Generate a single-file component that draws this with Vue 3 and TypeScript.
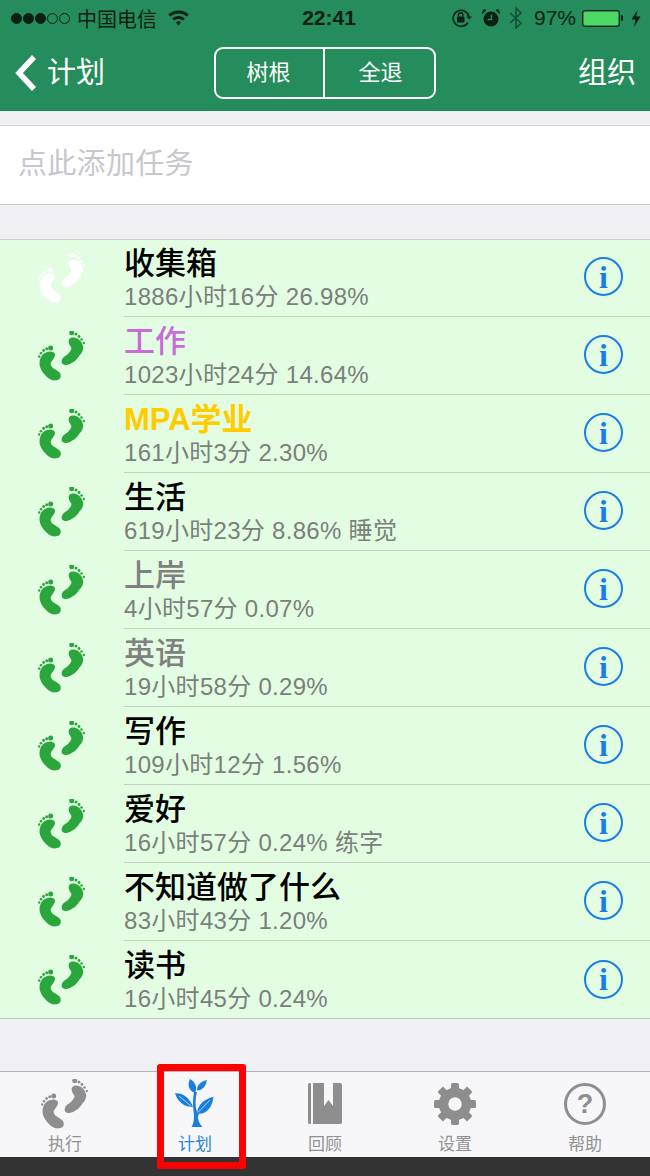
<script setup lang="ts">
interface Plan {
  title: string
  detail: string
  tone?: string
  idle?: boolean
}

const plans: Plan[] = [
  { title: '收集箱', detail: '1886小时16分 26.98%', idle: true },
  { title: '工作', detail: '1023小时24分 14.64%', tone: 'purple' },
  { title: 'MPA学业', detail: '161小时3分 2.30%', tone: 'yellow' },
  { title: '生活', detail: '619小时23分 8.86% 睡觉' },
  { title: '上岸', detail: '4小时57分 0.07%', tone: 'gray' },
  { title: '英语', detail: '19小时58分 0.29%', tone: 'gray' },
  { title: '写作', detail: '109小时12分 1.56%' },
  { title: '爱好', detail: '16小时57分 0.24% 练字' },
  { title: '不知道做了什么', detail: '83小时43分 1.20%' },
  { title: '读书', detail: '16小时45分 0.24%' },
]

const signal = [true, true, true, false, false]
const gearTeeth = [0, 45, 90, 135, 180, 225, 270, 315]
</script>

<template>
  <div class="app">
    <svg class="defs" width="0" height="0">
      <symbol id="feet" viewBox="0 -1 48 50">
        <path d="M31.300 7C33 5.500 35 5.200 37 5.700C41 6.500 44.500 10 45.300 15.700C45 19 43.500 21.500 41.300 23.700C39.500 26.500 37.500 29 34.700 30.300C32 32.300 29.500 33.500 27 33C24.500 32.500 23.300 31 23.700 29C24 27 25 25.500 26.500 24.500C28.500 23.300 30.500 22 31.300 20.300C33 18.500 33.800 17 33.300 15.700C32.500 14 31 12.500 30.700 10.300C30.500 9 30.700 8 31.300 7Z" />
        <circle cx="33.700" cy="0.800" r="2.500" />
        <circle cx="38" cy="2" r="1.500" />
        <circle cx="41" cy="4.500" r="1.400" />
        <circle cx="43.500" cy="7.500" r="1.300" />
        <circle cx="45.800" cy="11" r="1.200" />
        <path d="M3.700 23.700C5 22 7 20.800 8.700 20.300C10.500 19.500 12.500 19.300 13.700 19.700C16 20.300 17.300 21.500 17 23C16.800 25 15.700 26.500 14.700 28C13.300 29.700 12.500 31 12.700 32.300C13 34 14 35.300 15.300 36.300C17.500 37.800 19.700 38.800 21.300 40.300C22.500 41.500 23 43 22.700 44.700C22.300 46.500 21 47.700 19.300 48C17.300 48.500 15.500 48.500 13.700 48C11 47 9 45 7 43C4.500 40.500 3 37.500 2 34.700C1 31.500 1.500 27 3.700 23.700Z" />
        <circle cx="12.700" cy="16" r="2.500" />
        <circle cx="8.700" cy="16.700" r="1.500" />
        <circle cx="5.600" cy="18.500" r="1.400" />
        <circle cx="3" cy="21.200" r="1.300" />
        <circle cx="1.200" cy="24.500" r="1.200" />
      </symbol>
    </svg>

    <header class="top">
      <div class="status">
        <div class="status-left">
          <span class="dots">
            <i v-for="(on, idx) in signal" :key="idx" class="dot" :class="{ on }"></i>
          </span>
          <span class="carrier">中国电信</span>
          <svg class="wifi" width="21" height="16" viewBox="0 0 21 16">
            <path d="M10.500 0.500C6.500 0.500 3 2 0.300 4.500L2.300 6.600C4.500 4.500 7.300 3.400 10.500 3.400C13.700 3.400 16.500 4.500 18.700 6.600L20.700 4.500C18 2 14.500 0.500 10.500 0.500Z" />
            <path d="M10.500 6C8 6 5.800 6.900 4.200 8.500L6.200 10.600C7.300 9.500 8.800 8.900 10.500 8.900C12.200 8.900 13.700 9.500 14.800 10.600L16.800 8.500C15.200 6.900 13 6 10.500 6Z" />
            <path d="M10.500 11.300C9.500 11.300 8.700 11.700 8.100 12.300L10.500 15.500L12.900 12.300C12.300 11.700 11.500 11.300 10.500 11.300Z" />
          </svg>
        </div>
        <span class="time">22:41</span>
        <div class="status-right">
          <svg class="rot" width="21" height="20" viewBox="0 0 21 20">
            <path d="M17 14.500A8 8 0 1 1 18 9" fill="none" stroke="#0b1f14" stroke-width="1.500" />
            <path d="M15.500 8.500H21L18.200 11.500Z" fill="#0b1f14" />
            <rect x="6" y="8.500" width="7.500" height="6" rx="1" fill="#0b1f14" />
            <path d="M7.500 8.500V7A2.200 2.200 0 0 1 12 7V8.500" fill="none" stroke="#0b1f14" stroke-width="1.300" />
          </svg>
          <svg class="alarm" width="18" height="18" viewBox="0 0 18 18">
            <circle cx="9" cy="10" r="7.500" fill="#0b1f14" />
            <path d="M0.500 4.500L4 1.200L1.500 0.800ZM17.500 4.500L14 1.200L16.500 0.800Z" fill="#0b1f14" stroke="#0b1f14" />
            <path d="M9.500 5.500V10.500H5.500" fill="none" stroke="#258c5b" stroke-width="1.500" />
          </svg>
          <svg class="bt" width="14" height="22" viewBox="0 0 14 22">
            <path d="M1 6L12 16L7 21V1L12 6L1 16" fill="none" stroke="#14513a" stroke-width="1.600" />
          </svg>
          <span class="percent">97%</span>
          <span class="battery"><span class="battery-fill"></span></span>
          <span class="nub"></span>
          <svg class="bolt" width="10" height="17" viewBox="0 0 10 17">
            <path d="M6.500 0L0.500 9.500H4.500L3 17L9.500 6.500H5.300Z" fill="#0b1f14" />
          </svg>
        </div>
      </div>
      <nav class="nav">
        <div class="back">
          <svg width="24" height="38" viewBox="0 0 24 38">
            <path d="M20 3L5 19L20 35" fill="none" stroke="#fff" stroke-width="5.500" />
          </svg>
          <span>计划</span>
        </div>
        <div class="segment">
          <span class="seg-item">树根</span>
          <span class="seg-item">全退</span>
        </div>
        <span class="organize">组织</span>
      </nav>
    </header>

    <main class="main">
      <div class="add-task">点此添加任务</div>
      <section class="list">
        <div v-for="plan in plans" :key="plan.title" class="row">
          <div class="row-icon" :class="{ idle: plan.idle }">
            <svg width="48" height="50"><use href="#feet" /></svg>
          </div>
          <div class="row-body">
            <div class="row-text">
              <div class="row-title" :class="plan.tone">{{ plan.title }}</div>
              <div class="row-detail">{{ plan.detail }}</div>
            </div>
            <span class="info">i</span>
          </div>
        </div>
      </section>
    </main>

    <footer class="tabs">
      <div class="tab">
        <svg class="tab-icon" width="48" height="50"><use href="#feet" /></svg>
        <span>执行</span>
      </div>
      <div class="tab active">
        <svg class="tab-icon" width="40" height="50" viewBox="0 0 40 50">
          <path d="M19 13H22C20 20 20 27 22 33L24 35C22 38 23 43 27.500 48H16.500C19 44 19.500 38 18.500 32C17.500 26 18 19 19 13Z" />
          <path d="M0 14.300C6 13.500 14 17 18 28C10 28 3 24 0 14.300Z" />
          <path d="M4 17L16 27" stroke="#f7f7fa" stroke-width="0.700" />
          <path d="M38.500 17.700C37 29 31 36 22 34.500C22.500 26 29 20 38.500 17.700Z" />
          <path d="M35 21L23 33.500" stroke="#f7f7fa" stroke-width="0.700" />
          <path d="M15 0C20 3 23 8 20 14C14 12 12 6 15 0Z" />
          <path d="M31.700 1C31.500 7 27 11.500 22 11.500C22 6 25 3 31.700 1Z" />
        </svg>
        <span>计划</span>
      </div>
      <div class="tab">
        <svg class="tab-icon" width="36" height="50" viewBox="0 0 36 50">
          <path d="M4 4H2.500C1.500 4 1 5 1 6V43C1 44 1.500 45 2.500 45H4Z" />
          <path d="M6 4H17V27L21.500 21L26 27V4H33C34.500 4 35 5 35 6V43C35 44.500 34.500 45 33 45H6Z" />
        </svg>
        <span>回顾</span>
      </div>
      <div class="tab">
        <svg class="tab-icon" width="44" height="50" viewBox="-22 -25 44 50">
          <circle r="11.500" fill="none" stroke="#8e8e8e" stroke-width="9.500" />
          <rect
            v-for="deg in gearTeeth"
            :key="deg"
            x="-4"
            y="-21"
            width="8"
            height="8"
            rx="1.500"
            :transform="`rotate(${deg})`"
          />
        </svg>
        <span>设置</span>
      </div>
      <div class="tab">
        <div class="tab-icon help"><span>?</span></div>
        <span>帮助</span>
      </div>
    </footer>
    <div class="home-strip"></div>
    <div class="highlight"></div>
  </div>
</template>

<style scoped>
.app {
  position: relative;
  width: 650px;
  height: 1176px;
  display: flex;
  flex-direction: column;
  overflow: hidden;
  background: #efeff4;
  font-family: "Liberation Sans", "Noto Sans CJK SC", sans-serif;
}

.defs {
  position: absolute;
}

.top {
  height: 111px;
  background: #258c5b;
}

.status {
  height: 36px;
  display: grid;
  grid-template-columns: 1fr auto 1fr;
  align-items: center;
  color: #0b1f14;
  padding: 0 9px 0 11px;
}

.status-left,
.status-right {
  display: flex;
  align-items: center;
}

.status-right {
  justify-content: flex-end;
}

.dots {
  display: flex;
  gap: 1px;
}

.dot {
  width: 11px;
  height: 11px;
  box-sizing: border-box;
  border: 1px solid #0b1f14;
  border-radius: 50%;
}

.dot.on {
  background: #0b1f14;
}

.carrier {
  font-size: 20px;
  margin-left: 7px;
}

.wifi {
  margin-left: 11px;
  fill: #0b1f14;
}

.time {
  font-size: 21px;
  font-weight: 700;
  margin-left: 6px;
}

.rot {
  margin-right: 10px;
}

.alarm {
  margin-right: 9px;
}

.bt {
  margin-right: 11px;
}

.percent {
  font-size: 21px;
  margin-right: 6px;
}

.battery {
  width: 38px;
  height: 17px;
  box-sizing: border-box;
  border: 1px solid #0b1f14;
  border-radius: 3px;
  padding: 1px;
  display: flex;
}

.battery-fill {
  flex: 1;
  background: #4cd964;
  border-radius: 1px;
}

.nub {
  width: 2px;
  height: 6px;
  background: #0b1f14;
  margin: 0 8px 0 1px;
  border-radius: 0 2px 2px 0;
}

.nav {
  height: 73px;
  display: grid;
  grid-template-columns: 1fr 222px 1fr;
  align-items: center;
  color: #fff;
  padding: 0 14px;
}

.back {
  display: flex;
  align-items: center;
  gap: 9px;
  font-size: 29px;
}

.back span,
.organize {
  padding-bottom: 6px;
}

.segment {
  height: 52px;
  box-sizing: border-box;
  border: 2px solid #fff;
  border-radius: 9px;
  display: grid;
  grid-template-columns: 107px 1fr;
}

.seg-item {
  display: flex;
  align-items: center;
  justify-content: center;
  font-size: 22px;
  padding: 0 2px 5px 0;
}

.seg-item + .seg-item {
  border-left: 2px solid #fff;
  padding: 0 0 5px 2px;
}

.organize {
  justify-self: end;
  font-size: 29px;
}

.main {
  flex: 1;
  padding-top: 14px;
}

.add-task {
  height: 80px;
  box-sizing: border-box;
  display: flex;
  align-items: center;
  padding: 0 0 8px 18px;
  background: #fff;
  border-top: 1px solid #d4d4d8;
  border-bottom: 1px solid #c8c8cc;
  font-size: 29px;
  letter-spacing: 0.3px;
  color: #c7c7cd;
}

.list {
  margin-top: 34px;
  background: #e3fde3;
  border-top: 1px solid #c8d4c8;
  height: 780px;
  box-sizing: border-box;
  border-bottom: 1px solid #c0c8c0;
}

.row {
  height: 78px;
  display: flex;
  margin-top: -1px;
  margin-bottom: 1px;
}

.row-icon {
  width: 124px;
  display: flex;
  align-items: center;
  justify-content: center;
  color: #2aa63c;
  fill: currentColor;
}

.row-icon.idle {
  color: #fff;
}

.row-body {
  flex: 1;
  display: flex;
  align-items: center;
  justify-content: space-between;
  padding-right: 27px;
  border-bottom: 1px solid #c4d2c4;
}

.row:last-child .row-body {
  border-bottom: none;
}

.row-text {
  align-self: flex-start;
  padding-top: 8px;
}

.row-title {
  font-size: 31px;
  line-height: 34px;
  font-weight: 500;
  color: #000;
}

.row-title.purple {
  color: #c86dd7;
}

.row-title.yellow {
  color: #ffcc00;
  font-weight: 700;
}

.row-title.gray {
  color: #808080;
}

.row-detail {
  font-size: 24px;
  line-height: 32px;
  letter-spacing: 0.3px;
  color: #7a807a;
}

.info {
  width: 39px;
  height: 39px;
  box-sizing: border-box;
  margin-bottom: 2px;
  border: 2px solid #1a7de8;
  border-radius: 50%;
  display: flex;
  align-items: center;
  justify-content: center;
  font-family: "Liberation Serif", serif;
  font-size: 32px;
  font-weight: 700;
  line-height: 1;
  color: #1a7de8;
}

.tabs {
  height: 86px;
  box-sizing: border-box;
  display: grid;
  grid-template-columns: repeat(5, 1fr);
  background: #f7f7fa;
  border-top: 1px solid #b4b4b8;
  color: #929292;
  font-size: 17px;
}

.tab {
  display: flex;
  flex-direction: column;
  align-items: center;
  padding-top: 7px;
  fill: #8e8e8e;
  color: #929292;
}

.tab-icon {
  height: 50px;
  margin-bottom: 6px;
  color: #8e8e8e;
}

.tab > span {
  line-height: 20px;
}

.tab.active {
  fill: #1a7de0;
  color: #2a86d8;
}

.help {
  width: 42px;
  height: 42px;
  box-sizing: border-box;
  margin: 4px 0 10px;
  border: 3px solid #8e8e8e;
  border-radius: 50%;
  display: flex;
  align-items: center;
  justify-content: center;
  font-size: 27px;
  font-weight: 700;
}

.home-strip {
  height: 19px;
  background: #333;
}

.highlight {
  position: absolute;
  left: 157px;
  top: 1064px;
  width: 89px;
  height: 105px;
  box-sizing: border-box;
  border: 7px solid #f00;
  border-radius: 3px;
}
</style>
